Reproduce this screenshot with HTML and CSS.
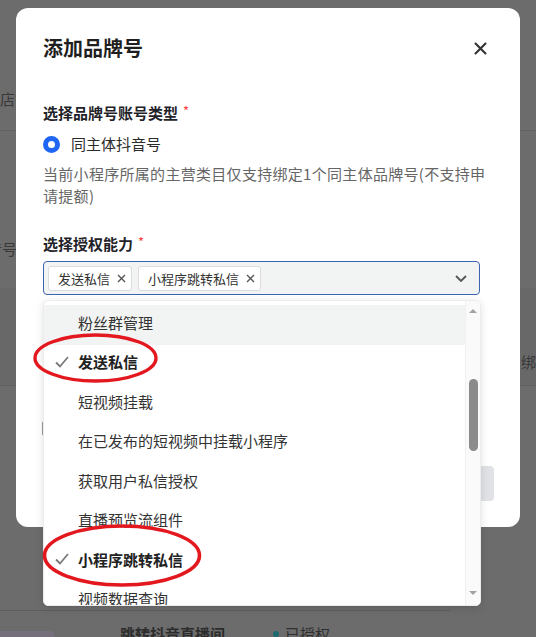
FILE: index.html
```html
<!DOCTYPE html>
<html lang="zh-CN">
<head>
<meta charset="utf-8">
<title>添加品牌号</title>
<link rel="stylesheet" href="styles.css">
</head>
<body>
<div class="page">
  <div class="row row-top"><span class="bg-text shop">店铺</span></div>
  <div class="row row-second"><span class="bg-text douyin">抖音号</span></div>
  <div class="row row-head"><span class="bg-text bind">绑定</span></div>
  <div class="row row-body"></div>
  <div class="row row-last">
    <span class="badge"></span>
    <span class="bg-strong">跳转抖音直播间</span>
    <span class="status"><i class="dot"></i>已授权</span>
  </div>
</div>

<div class="modal">
  <div class="modal-header">
    <h2 class="modal-title">添加品牌号</h2>
    <svg class="close" width="13" height="13" viewBox="0 0 13 13"><path d="M1.5 1.5 L11.5 11.5 M11.5 1.5 L1.5 11.5" stroke="#333" stroke-width="2.1" stroke-linecap="round"/></svg>
  </div>

  <div class="field first">
    <div class="label">选择品牌号账号类型<span class="req">*</span></div>
    <div class="radio-row"><span class="radio"></span><span>同主体抖音号</span></div>
    <p class="desc">当前小程序所属的主营类目仅支持绑定1个同主体品牌号(不支持申请提额)</p>
  </div>

  <div class="field second">
    <div class="label">选择授权能力<span class="req">*</span></div>
    <div class="select-wrap">
      <div class="select">
        <span class="tag">发送私信<svg width="9" height="9" viewBox="0 0 9 9"><path d="M1 1 L8 8 M8 1 L1 8" stroke="#555" stroke-width="1.4"/></svg></span>
        <span class="tag">小程序跳转私信<svg width="9" height="9" viewBox="0 0 9 9"><path d="M1 1 L8 8 M8 1 L1 8" stroke="#555" stroke-width="1.4"/></svg></span>
        <svg class="chev" width="12" height="7" viewBox="0 0 12 7"><path d="M1 1 L6 6 L11 1" fill="none" stroke="#555" stroke-width="1.8"/></svg>
      </div>
      <div class="dropdown">
        <ul class="options">
          <li class="opt hover"><span class="lead"></span>粉丝群管理</li>
          <li class="opt sel"><span class="lead"><svg width="14" height="12" viewBox="0 0 14 12"><path d="M1 6.5 L5 10.5 L13 1" fill="none" stroke="#7a7a7a" stroke-width="1.8"/></svg></span>发送私信</li>
          <li class="opt"><span class="lead"></span>短视频挂载</li>
          <li class="opt"><span class="lead"></span>在已发布的短视频中挂载小程序</li>
          <li class="opt"><span class="lead"></span>获取用户私信授权</li>
          <li class="opt"><span class="lead"></span>直播预览流组件</li>
          <li class="opt sel"><span class="lead"><svg width="14" height="12" viewBox="0 0 14 12"><path d="M1 6.5 L5 10.5 L13 1" fill="none" stroke="#7a7a7a" stroke-width="1.8"/></svg></span>小程序跳转私信</li>
          <li class="opt"><span class="lead"></span>视频数据查询</li>
        </ul>
        <div class="scrollbar">
          <span class="arrow up"></span>
          <span class="thumb"></span>
          <span class="arrow down"></span>
        </div>
      </div>
    </div>
  </div>

  <div class="field third">
    <div class="check-row"><span class="checkbox"></span></div>
  </div>

  <div class="footer">
    <span class="btn"></span>
  </div>
</div>

<svg class="marks" width="536" height="637" viewBox="0 0 536 637">
  <ellipse cx="95.5" cy="358" rx="60.5" ry="23" fill="none" stroke="#e3181f" stroke-width="3.4"/>
  <ellipse cx="122" cy="555.5" rx="77.5" ry="29.5" fill="none" stroke="#e3181f" stroke-width="3.6"/>
</svg>
</body>
</html>
```

FILE: styles.css
```css
* { box-sizing: border-box; }
html, body { margin: 0; padding: 0; }
body {
  width: 536px;
  height: 637px;
  overflow: hidden;
  position: relative;
  background: #6c6c6c;
  font-family: "Noto Sans CJK SC", "Noto Sans", sans-serif;
  color: #333;
}

/* background page (under mask) */
.page { width: 536px; height: 637px; overflow: hidden; }
.row { border-bottom: 1px solid #616161; position: relative; overflow: hidden; }
.row-top { height: 131px; display: flex; align-items: flex-end; padding-bottom: 20px; }
.row-second { height: 157px; display: flex; align-items: flex-end; padding-bottom: 28px; border-bottom: none; }
.row-head { height: 98px; background: #686868; display: flex; align-items: flex-end; padding: 0 0 12px 521px; }
.row-body { height: 225px; border-bottom: 1px solid #5e5e5e; margin-right: 86px; }
.row-last { height: 40px; border-bottom: none; display: flex; align-items: flex-start; padding-top: 12px; }
.bg-text { font-size: 15px; line-height: 22px; color: #393939; white-space: nowrap; }
.douyin { margin-left: -28px; }
.badge { width: 55px; height: 24px; margin-top: 8px; border-radius: 0 6px 0 0; background: #75707c; }
.bg-strong { margin-left: 65px; font-size: 15px; font-weight: 700; color: #2c2c2c; line-height: 22px; }
.status { margin-left: 48px; font-size: 15px; color: #2f2f2f; line-height: 22px; display: flex; align-items: center; gap: 6px; }
.dot { width: 6px; height: 6px; border-radius: 50%; background: #1c6b72; display: inline-block; }

/* modal */
.modal {
  position: absolute;
  left: 16px;
  top: 8px;
  width: 504px;
  height: 519px;
  background: #fff;
  border-radius: 12px;
  padding: 28px 27px 0 27px;
}
.modal-header { display: flex; justify-content: space-between; align-items: center; height: 24px; }
.modal-title { margin: 0; font-size: 20px; line-height: 24px; font-weight: 700; color: #1f1f1f; }
.close { margin-right: 6px; }

.field.first { margin-top: 42px; }
.field.second { margin-top: 26px; }
.label { font-size: 15px; line-height: 22px; font-weight: 700; color: #1f2329; }
.req { color: #f0443a; font-weight: 400; font-size: 13px; margin-left: 5px; position: relative; top: -3px; }
.radio-row { margin-top: 8px; display: flex; align-items: center; gap: 11px; font-size: 15px; line-height: 22px; color: #2b2b2b; }
.radio { width: 17px; height: 17px; border-radius: 50%; border: 5.5px solid #1f66f5; background: #fff; }
.desc { margin: 8px 0 0; font-size: 15px; line-height: 22px; color: #666; letter-spacing: 0.3px; }

.select-wrap { position: relative; margin-top: 5px; width: 437px; }
.select {
  height: 34px;
  display: flex;
  align-items: center;
  gap: 6px;
  padding: 0 12px 0 4px;
  border: 1px solid #3b63ae;
  border-radius: 4px;
  background: #f2f4f4;
}
.tag {
  height: 25px;
  display: inline-flex;
  align-items: center;
  gap: 7px;
  padding: 0 5px 0 9px;
  border: 1px solid #dcdcdc;
  border-radius: 3px;
  background: #fff;
  font-size: 13px;
  color: #333;
}
.chev { margin-left: auto; }

.dropdown {
  position: absolute;
  left: 0;
  top: 39px;
  width: 438px;
  height: 306px;
  background: #fff;
  border: 1px solid #ececec;
  border-radius: 5px;
  box-shadow: 0 2px 8px rgba(0,0,0,0.12);
  display: flex;
  overflow: hidden;
  z-index: 5;
}
.options { list-style: none; margin: 0; padding: 4px 0 0; flex: 1; }
.opt { height: 39.5px; padding-bottom: 5px; display: flex; align-items: center; font-size: 15px; color: #333; white-space: nowrap; }
.opt.hover { background: #f2f4f4; }
.opt.sel { font-weight: 700; color: #222; }
.lead { width: 34px; display: flex; align-items: center; padding-left: 11px; }
.scrollbar {
  width: 15px;
  background: #fafafa;
  border-left: 1px solid #f0f0f0;
  display: flex;
  flex-direction: column;
  align-items: center;
  padding: 8px 0 10px;
}
.arrow { width: 0; height: 0; border-left: 4px solid transparent; border-right: 4px solid transparent; }
.arrow.up { border-bottom: 4px solid #a3a3a3; }
.arrow.down { border-top: 4px solid #a3a3a3; margin-top: auto; }
.thumb { width: 9px; height: 72px; margin-top: 66px; border-radius: 5px; background: #8b8b8b; }

.field.third { margin-top: 126px; }
.check-row { display: flex; align-items: center; margin-left: -1px; }
.checkbox { width: 15px; height: 15px; border: 1px solid #999; border-radius: 2px; }
.footer { display: flex; justify-content: flex-end; margin-top: 30px; margin-right: -1px; }
.btn { width: 72px; height: 35px; border-radius: 4px; background: #e1e2e5; }

.marks { position: absolute; left: 0; top: 0; pointer-events: none; z-index: 10; }
```
